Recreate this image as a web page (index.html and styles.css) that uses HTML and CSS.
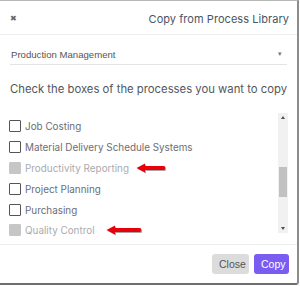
FILE: index.html
```
<!DOCTYPE html>
<html>
<head>
<meta charset="utf-8">
<link rel="stylesheet" href="styles.css">
</head>
<body>
<div class="modal">
  <div class="header">
    <span class="close-x">&#x2716;</span>
    <span class="title">Copy from Process Library</span>
  </div>
  <div class="body">
    <div class="select">
      <span>Production Management</span>
      <span class="caret">&#9662;</span>
    </div>
    <div class="heading">Check the boxes of the processes you want to copy</div>
    <div class="listwrap">
      <ul class="list">
        <li><span class="box"></span>Job Costing</li>
        <li><span class="box"></span>Material Delivery Schedule Systems</li>
        <li class="disabled"><span class="box"></span>Productivity Reporting<svg class="arrow a1" width="30" height="10" viewBox="0 0 30 10"><path d="M0.5 5 L9 0.5 L9 3 L28.5 3 Q30 5 28.5 7 L9 7 L9 9.5 Z" fill="#e8000b"/></svg></li>
        <li><span class="box"></span>Project Planning</li>
        <li><span class="box"></span>Purchasing</li>
        <li class="disabled"><span class="box"></span>Quality Control<svg class="arrow a2" width="36" height="10" viewBox="0 0 36 10"><path d="M0.5 5 L9 0.5 L9 3 L34.5 3 Q36 5 34.5 7 L9 7 L9 9.5 Z" fill="#e8000b"/></svg></li>
      </ul>
      <div class="scrollbar">
        <span class="sa up"></span>
        <span class="track"><span class="thumb"></span></span>
        <span class="sa down"></span>
      </div>
    </div>
  </div>
  <div class="footer">
    <button class="btn btn-close">Close</button>
    <button class="btn btn-copy">Copy</button>
  </div>
</div>
</body>
</html>
```
FILE: styles.css
```
html, body { margin: 0; padding: 0; background: #fff; }
body { width: 300px; height: 286px; overflow: hidden; }
.modal {
  box-sizing: border-box;
  width: 299px;
  height: 285px;
  border-top: 1px solid #b8b8b8;
  border-right: 2px solid #8c8c8c;
  border-bottom: 2px solid #6e6e6e;
  border-bottom-right-radius: 3px;
  display: flex;
  flex-direction: column;
  font-family: "Inter", "Open Sans", sans-serif;
}
.header {
  height: 33px;
  display: flex;
  align-items: center;
  justify-content: space-between;
  padding: 0 8px 0 10px;
  border-bottom: 1px solid #eceef0;
}
.close-x { font-size: 8px; color: #666; font-family: "DejaVu Sans", sans-serif; margin-top: 2px; }
.title { font-size: 11px; color: #4a5563; letter-spacing: 0.05px; margin-top: 3px; }
.body { padding: 0 10px 0 10px; flex: 1; display: flex; flex-direction: column; }
.select {
  margin-top: 9px;
  height: 20px;
  border-bottom: 1px solid #e2e4e6;
  display: flex;
  align-items: center;
  justify-content: space-between;
  font-family: "Liberation Sans", Arial, sans-serif;
  font-size: 9.6px;
  color: #555;
  padding-left: 1px;
}
.caret { font-size: 7px; color: #777; margin-right: 5px; }
.heading { margin-top: 17px; font-size: 11.3px; color: #52565c; white-space: nowrap; }
.listwrap { margin-top: 17px; display: flex; justify-content: space-between; height: 120px; }
.list { list-style: none; margin: 0; padding: 3px 0 0 0; }
.list li {
  height: 20.8px;
  display: flex;
  align-items: center;
  font-size: 9.9px;
  color: #6b6e74;
  white-space: nowrap;
}
.box {
  box-sizing: border-box;
  width: 12px; height: 12px;
  border: 1.5px solid #555;
  border-radius: 1px;
  margin-right: 4px;
  margin-left: -1px;
  flex: none;
}
.list li.disabled { color: #a9abae; }
.list li.disabled .box { background: #c6c6c6; border-color: #c6c6c6; }
.arrow { filter: drop-shadow(1px 1px 0.6px rgba(0,0,0,0.35)); }
.a1 { margin-left: 7px; }
.a2 { margin-left: 11px; }
.scrollbar {
  width: 10px;
  margin-right: -1px;
  background: #f1f1f1;
  display: flex;
  flex-direction: column;
  align-items: center;
}
.sa { width: 0; height: 0; border-left: 2.5px solid transparent; border-right: 2.5px solid transparent; margin: 3px 0; }
.up { border-bottom: 3px solid #505050; }
.down { border-top: 3px solid #505050; }
.track { flex: 1; width: 8px; display: flex; flex-direction: column; justify-content: center; padding-top: 18px; }
.thumb { height: 30px; background: #c1c1c1; }
.footer {
  border-top: 1px solid #eceef0;
  margin-top: 11px;
  height: 38px;
  display: flex;
  justify-content: flex-end;
  align-items: center;
  gap: 5px;
  padding: 0 8px 0 0;
}
.btn {
  border: none;
  border-radius: 3px;
  height: 20px;
  font-family: "Liberation Sans", Arial, sans-serif;
  font-size: 10.5px;
  padding: 0 7px;
}
.btn-close { background: #dcdcdc; color: #555; width: 37px; }
.btn-copy { background: #7a5cf0; color: #fff; width: 35px; }
```
